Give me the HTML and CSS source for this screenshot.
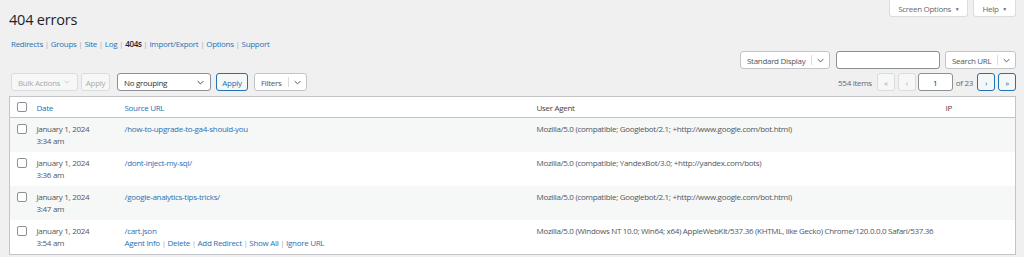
FILE: index.html
```html
<!DOCTYPE html>
<html>
<head>
  <title>404 errors</title>
  <link rel="stylesheet" href="styles.css">
</head>
<body>
  <div class="wrap">
    <div class="top">
      <h1>404 errors</h1>
      <div class="meta-links">
        <button class="meta-tab">Screen Options <span class="tri">&#9660;</span></button>
        <button class="meta-tab">Help <span class="tri">&#9660;</span></button>
      </div>
    </div>

    <ul class="subnav">
      <li><a href="#">Redirects</a> |</li>
      <li><a href="#">Groups</a> |</li>
      <li><a href="#">Site</a> |</li>
      <li><a href="#">Log</a> |</li>
      <li><a href="#" class="current">404s</a> |</li>
      <li><a href="#">Import/Export</a> |</li>
      <li><a href="#">Options</a> |</li>
      <li><a href="#">Support</a></li>
    </ul>

    <div class="search-row">
      <div class="dropbtn display-select">
        <span class="label">Standard Display</span>
        <span class="caret"><svg viewBox="0 0 10 6" width="7" height="5"><path d="M1 1l4 4 4-4" fill="none" stroke="#50575e" stroke-width="1.4"/></svg></span>
      </div>
      <input class="search-input" type="text">
      <div class="dropbtn search-select">
        <span class="label">Search URL</span>
        <span class="caret"><svg viewBox="0 0 10 6" width="7" height="5"><path d="M1 1l4 4 4-4" fill="none" stroke="#50575e" stroke-width="1.4"/></svg></span>
      </div>
    </div>

    <div class="tablenav">
      <div class="actions">
        <div class="btn disabled bulk">Bulk Actions <svg viewBox="0 0 10 6" width="6" height="4"><path d="M1 1l4 4 4-4" fill="none" stroke="#c3c4c7" stroke-width="1.4"/></svg></div>
        <div class="btn disabled apply-bulk">Apply</div>
        <div class="select grouping">No grouping <svg viewBox="0 0 10 6" width="7" height="5"><path d="M1 1l4 4 4-4" fill="none" stroke="#3c434a" stroke-width="1.4"/></svg></div>
        <div class="btn primary-outline">Apply</div>
        <div class="dropbtn filters">
          <span class="label">Filters</span>
          <span class="caret"><svg viewBox="0 0 10 6" width="7" height="5"><path d="M1 1l4 4 4-4" fill="none" stroke="#50575e" stroke-width="1.4"/></svg></span>
        </div>
      </div>
      <div class="pagination">
        <span class="count">554 items</span>
        <span class="pbtn off">&laquo;</span>
        <span class="pbtn off">&lsaquo;</span>
        <input class="page-input" type="text" value="1">
        <span class="of">of 23</span>
        <span class="pbtn on">&rsaquo;</span>
        <span class="pbtn on">&raquo;</span>
      </div>
    </div>

    <table class="list">
      <colgroup>
        <col class="c-check">
        <col class="c-date">
        <col class="c-url">
        <col class="c-agent">
        <col class="c-ip">
      </colgroup>
      <thead>
        <tr>
          <th class="check"><span class="box"></span></th>
          <th><a href="#">Date</a></th>
          <th><a href="#">Source URL</a></th>
          <th><span class="th-label">User Agent</span></th>
          <th><span class="th-label">IP</span></th>
        </tr>
      </thead>
      <tbody>
        <tr class="alt">
          <td class="check"><span class="box"></span></td>
          <td>January 1, 2024<br>3:34 am</td>
          <td><a href="#">/how-to-upgrade-to-ga4-should-you</a></td>
          <td>Mozilla/5.0 (compatible; Googlebot/2.1; +http://www.google.com/bot.html)</td>
          <td></td>
        </tr>
        <tr>
          <td class="check"><span class="box"></span></td>
          <td>January 1, 2024<br>3:36 am</td>
          <td><a href="#">/dont-inject-my-sql/</a></td>
          <td>Mozilla/5.0 (compatible; YandexBot/3.0; +http://yandex.com/bots)</td>
          <td></td>
        </tr>
        <tr class="alt">
          <td class="check"><span class="box"></span></td>
          <td>January 1, 2024<br>3:47 am</td>
          <td><a href="#">/google-analytics-tips-tricks/</a></td>
          <td>Mozilla/5.0 (compatible; Googlebot/2.1; +http://www.google.com/bot.html)</td>
          <td></td>
        </tr>
        <tr>
          <td class="check"><span class="box"></span></td>
          <td>January 1, 2024<br>3:54 am</td>
          <td>
            <a href="#">/cart.json</a>
            <div class="row-actions">
              <a href="#">Agent Info</a> | <a href="#">Delete</a> | <a href="#">Add Redirect</a> | <a href="#">Show All</a> | <a href="#">Ignore URL</a>
            </div>
          </td>
          <td>Mozilla/5.0 (Windows NT 10.0; Win64; x64) AppleWebKit/537.36 (KHTML, like Gecko) Chrome/120.0.0.0 Safari/537.36</td>
          <td></td>
        </tr>
      </tbody>
    </table>
  </div>
</body>
</html>
```

FILE: styles.css
```css
body {
  margin: 0;
  background-color: #f0f0f1;
  font-family: "Open Sans", "Noto Sans", sans-serif;
  font-size: 8px;
  letter-spacing: -0.3px;
  color: #3c434a;
  white-space: nowrap;
}

a {
  color: #2a72b3;
  text-decoration: none;
}

.wrap {
  padding: 0 8px 0 9px;
}

.top {
  display: flex;
  justify-content: space-between;
  align-items: flex-start;
  height: 38px;
}

h1 {
  margin: 0;
  padding-top: 10px;
  font-size: 14.5px;
  font-weight: 400;
  letter-spacing: -0.2px;
  color: #1d2327;
}

.meta-links {
  display: flex;
  gap: 5px;
}

.meta-tab {
  height: 17px;
  padding: 0 8px;
  border: 1px solid #dcdcde;
  border-top: none;
  border-radius: 0 0 3px 3px;
  background-color: #fff;
  font-family: inherit;
  font-size: 8px;
  letter-spacing: -0.3px;
  color: #646970;
}

.meta-tab .tri {
  font-size: 5px;
  margin-left: 2px;
  vertical-align: 1px;
}

.subnav {
  list-style: none;
  margin: 0;
  padding: 0 0 0 2px;
  display: flex;
  gap: 2px;
  color: #a7aaad;
  height: 13px;
}

.subnav .current {
  color: #1d2327;
  font-weight: 600;
}

.search-row {
  display: flex;
  justify-content: flex-end;
  gap: 5px;
  height: 18px;
  margin-bottom: 4px;
}

.dropbtn {
  display: flex;
  align-items: stretch;
  height: 18px;
  box-sizing: border-box;
  border: 1px solid #c3c4c7;
  border-radius: 3px;
  background-color: #fff;
  color: #50575e;
}

.dropbtn .label {
  flex: 1;
  display: flex;
  align-items: center;
  padding: 0 6px;
}

.dropbtn .caret {
  display: flex;
  align-items: center;
  justify-content: center;
  border-left: 1px solid #dcdcde;
  margin: 3px 0;
  width: 18px;
}

.display-select {
  width: 90px;
  margin-right: 1px;
}

.search-input {
  width: 104px;
  height: 18px;
  box-sizing: border-box;
  border: 1px solid #8c8f94;
  border-radius: 3px;
  background-color: #fff;
}

.search-select {
  width: 71px;
}

.tablenav {
  display: flex;
  justify-content: space-between;
  align-items: center;
  padding-left: 2px;
  height: 18px;
  margin-bottom: 5px;
}

.actions {
  display: flex;
}

.btn {
  display: flex;
  align-items: center;
  gap: 4px;
  height: 18px;
  box-sizing: border-box;
  padding: 0 6px;
  border: 1px solid #c3c4c7;
  border-radius: 3px;
  background-color: #f6f7f7;
}

.btn.disabled {
  border-color: #dcdcde;
  color: #a7aaad;
}

.bulk {
  width: 67px;
}

.apply-bulk {
  margin-left: 3px;
  width: 29px;
  justify-content: center;
  padding: 0;
}

.select {
  display: flex;
  align-items: center;
  justify-content: space-between;
  height: 18px;
  box-sizing: border-box;
  padding: 0 6px;
  border: 1px solid #8c8f94;
  border-radius: 3px;
  background-color: #fff;
  color: #2c3338;
  width: 94px;
}

.grouping {
  margin-left: 7px;
}

.btn.primary-outline {
  margin-left: 5px;
  width: 32px;
  justify-content: center;
  padding: 0;
  border-color: #2271b1;
  color: #2271b1;
}

.filters {
  margin-left: 6px;
  width: 53px;
}

.pagination {
  display: flex;
  align-items: center;
  gap: 3px;
  color: #646970;
}

.count {
  margin-right: 2px;
}

.pbtn {
  display: flex;
  align-items: center;
  justify-content: center;
  width: 18px;
  height: 18px;
  box-sizing: border-box;
  border: 1px solid #dcdcde;
  border-radius: 3px;
  background-color: #f6f7f7;
  font-size: 8px;
}

.pbtn.off {
  color: #a7aaad;
}

.pbtn.on {
  border-color: #2271b1;
  color: #2271b1;
}

.page-input {
  width: 35px;
  height: 18px;
  box-sizing: border-box;
  border: 1px solid #8c8f94;
  border-radius: 3px;
  background-color: #fff;
  text-align: center;
  font-family: inherit;
  font-size: 8px;
  color: #2c3338;
  margin-left: -1px;
}

.of {
  margin-right: 1px;
}

.list {
  width: 100%;
  table-layout: fixed;
  border-collapse: collapse;
  border: 1px solid #c3c4c7;
  background-color: #fff;
}

.c-check { width: 21px; }
.c-date { width: 88px; }
.c-url { width: 412px; }
.c-agent { width: 409px; }

th {
  text-align: left;
  font-weight: 400;
  height: 20px;
  padding: 0 6px;
  border-bottom: 1px solid #c3c4c7;
}

.th-label {
  color: #3c434a;
}

td {
  vertical-align: top;
  padding: 5px 6px 5px 6px;
  line-height: 12px;
  color: #50575e;
}

tbody tr {
  height: 34px;
}

tr.alt {
  background-color: #f6f7f7;
}

.check {
  padding: 0 0 0 7px;
}

td.check {
  padding-top: 6px;
}

.box {
  display: block;
  width: 10px;
  height: 10px;
  box-sizing: border-box;
  border: 1px solid #8c8f94;
  border-radius: 2px;
  background-color: #fff;
}

.row-actions {
  color: #a7aaad;
}
```
